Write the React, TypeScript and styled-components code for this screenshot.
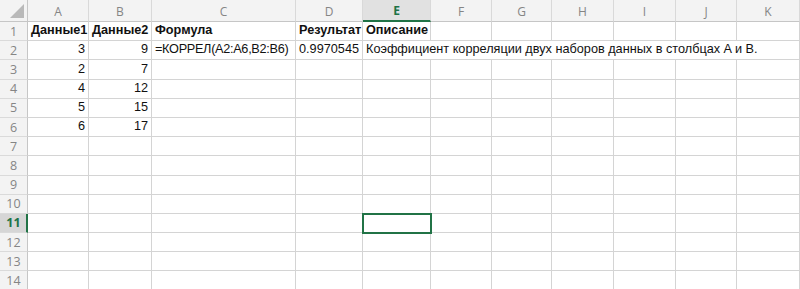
import React from 'react';
import styled, { createGlobalStyle } from 'styled-components';

const Global = createGlobalStyle`
    html, body {
        margin: 0;
        padding: 0;
        background: #fff;
        overflow: hidden;
    }
`

const COLS = ['A', 'B', 'C', 'D', 'E', 'F', 'G', 'H', 'I', 'J', 'K'];
const WIDTHS = [61, 63, 144, 67, 68, 61, 60, 62, 62, 61, 63];
const ROW_COUNT = 14;
const SEL_COL = 'E';
const SEL_ROW = 11;

const Sheet = styled.div`
    display: grid;
    grid-template-columns: 28px ${WIDTHS.map(w => w + 'px').join(' ')};
    grid-template-rows: 22px repeat(${ROW_COUNT}, 19.2px);
    width: 800px;
    height: 289px;
    overflow: hidden;
    font-family: "Liberation Sans", Arial, sans-serif;
    font-size: 12.7px;
    color: #111;
    position: relative;
`

const Corner = styled.div`
    background: #f3f3f3;
    border-right: 1px solid #c6c6c6;
    border-bottom: 1px solid #c6c6c6;
    display: flex;
    align-items: flex-end;
    justify-content: flex-end;
    padding: 0 3px 3px 0;
    box-sizing: border-box;
`

const ColHead = styled.div<{ $active?: boolean }>`
    background: ${p => p.$active ? '#e1e1e1' : '#f3f3f3'};
    color: ${p => p.$active ? '#217346' : '#858585'};
    font-family: "Open Sans", "Liberation Sans", sans-serif;
    font-weight: ${p => p.$active ? 700 : 400};
    font-size: 12px;
    border-right: 1px solid #d9d9d9;
    border-bottom: ${p => p.$active ? '2px solid #217346' : '1px solid #c6c6c6'};
    box-sizing: border-box;
    display: flex;
    align-items: center;
    justify-content: center;
    padding-top: 1px;
`

const RowHead = styled.div<{ $active?: boolean }>`
    background: ${p => p.$active ? '#d6d6d6' : '#f3f3f3'};
    color: ${p => p.$active ? '#217346' : '#858585'};
    font-family: "Open Sans", "Liberation Sans", sans-serif;
    font-weight: ${p => p.$active ? 700 : 400};
    font-size: 12.5px;
    border-right: ${p => p.$active ? '2px solid #217346' : '1px solid #c6c6c6'};
    border-bottom: 1px solid #dadada;
    box-sizing: border-box;
    display: flex;
    align-items: center;
    justify-content: center;
    padding-left: ${p => p.$active ? '1px' : '0'};
`

const Cell = styled.div<{ $align?: 'left' | 'right'; $bold?: boolean; $span?: number; $tight?: boolean }>`
    grid-column: ${p => p.$span ? `span ${p.$span}` : 'auto'};
    border-right: 1px solid #d4d4d4;
    border-bottom: 1px solid #d4d4d4;
    box-sizing: border-box;
    display: flex;
    align-items: flex-end;
    justify-content: ${p => p.$align === 'right' ? 'flex-end' : 'flex-start'};
    padding: 0 3px 2px 3px;
    font-weight: ${p => p.$bold ? 700 : 400};
    letter-spacing: ${p => p.$tight ? '-0.3px' : 'normal'};
    white-space: nowrap;
    overflow: visible;
    line-height: 15px;
`

const Selection = styled.div`
    position: absolute;
    border: 2px solid #217346;
    box-sizing: border-box;
    pointer-events: none;
`

type CellData = { col: number; text: string; align?: 'left' | 'right'; bold?: boolean; span?: number; tight?: boolean };

const DATA: Record<number, CellData[]> = {
    1: [
        { col: 0, text: 'Данные1', bold: true },
        { col: 1, text: 'Данные2', bold: true },
        { col: 2, text: 'Формула', bold: true },
        { col: 3, text: 'Результат', bold: true },
        { col: 4, text: 'Описание', bold: true },
    ],
    2: [
        { col: 0, text: '3', align: 'right' },
        { col: 1, text: '9', align: 'right' },
        { col: 2, text: '=КОРРЕЛ(A2:A6,B2:B6)', tight: true },
        { col: 3, text: '0.9970545', align: 'right' },
        { col: 4, text: 'Коэффициент корреляции двух наборов данных в столбцах A и B.', span: 7 },
    ],
    3: [{ col: 0, text: '2', align: 'right' }, { col: 1, text: '7', align: 'right' }],
    4: [{ col: 0, text: '4', align: 'right' }, { col: 1, text: '12', align: 'right' }],
    5: [{ col: 0, text: '5', align: 'right' }, { col: 1, text: '15', align: 'right' }],
    6: [{ col: 0, text: '6', align: 'right' }, { col: 1, text: '17', align: 'right' }],
}

const renderRow = (r: number) => {
    const filled = DATA[r] || [];
    const cells: React.ReactNode[] = [];
    let c = 0;
    while (c < COLS.length) {
        const d = filled.find(f => f.col === c);
        if (d) {
            cells.push(<Cell key={c} $align={d.align} $bold={d.bold} $span={d.span} $tight={d.tight}>{d.text}</Cell>);
            c += d.span || 1;
        } else {
            cells.push(<Cell key={c} />);
            c++;
        }
    }
    return cells;
}

const App: React.FC = () => {
    const selIdx = COLS.indexOf(SEL_COL);
    const selLeft = 28 + WIDTHS.slice(0, selIdx).reduce((a, b) => a + b, 0) - 1;
    const selTop = 22 + (SEL_ROW - 1) * 19.2 - 1;

    return <>
        <Global />
        <Sheet>
            <Corner>
                <svg width="14" height="14" viewBox="0 0 14 14">
                    <polygon points="14,0 14,14 0,14" fill="#b9b9b9" />
                </svg>
            </Corner>
            {COLS.map(c => <ColHead key={c} $active={c === SEL_COL}>{c}</ColHead>)}
            {Array.from({ length: ROW_COUNT }, (_, i) => i + 1).map(r =>
                <React.Fragment key={r}>
                    <RowHead $active={r === SEL_ROW}>{r}</RowHead>
                    {renderRow(r)}
                </React.Fragment>
            )}
            <Selection style={{ left: selLeft, top: selTop, width: WIDTHS[selIdx] + 2, height: 21.2 }} />
        </Sheet>
    </>
}

export default App;
